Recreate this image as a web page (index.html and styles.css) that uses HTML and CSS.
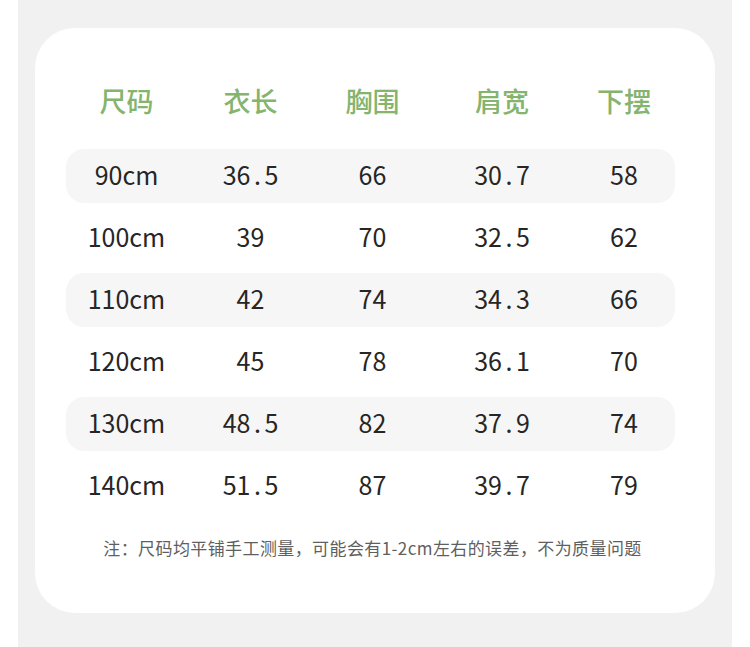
FILE: index.html
```html
<!DOCTYPE html>
<html lang="zh">
<head>
<meta charset="utf-8">
<link rel="stylesheet" href="styles.css">
</head>
<body>
<div class="frame">
  <div class="card">
    <div class="row head">
      <div>尺码</div><div>衣长</div><div>胸围</div><div>肩宽</div><div>下摆</div>
    </div>
    <div class="row shade">
      <div>90cm</div><div>36<span class="dot">.</span>5</div><div>66</div><div>30<span class="dot">.</span>7</div><div>58</div>
    </div>
    <div class="row">
      <div>100cm</div><div>39</div><div>70</div><div>32<span class="dot">.</span>5</div><div>62</div>
    </div>
    <div class="row shade">
      <div>110cm</div><div>42</div><div>74</div><div>34<span class="dot">.</span>3</div><div>66</div>
    </div>
    <div class="row">
      <div>120cm</div><div>45</div><div>78</div><div>36<span class="dot">.</span>1</div><div>70</div>
    </div>
    <div class="row shade">
      <div>130cm</div><div>48<span class="dot">.</span>5</div><div>82</div><div>37<span class="dot">.</span>9</div><div>74</div>
    </div>
    <div class="row">
      <div>140cm</div><div>51<span class="dot">.</span>5</div><div>87</div><div>39<span class="dot">.</span>7</div><div>79</div>
    </div>
    <p class="note">注：尺码均平铺手工测量，可能会有1-2cm左右的误差，不为质量问题</p>
  </div>
</div>
</body>
</html>
```
FILE: styles.css
```css
* { box-sizing: border-box; }
html, body { margin: 0; padding: 0; background: #ffffff; }
body { font-family: "Noto Sans CJK SC", "Noto Sans", sans-serif; }
.frame {
  margin: 0 18px;
  height: 647px;
  background: #f1f1f1;
  padding: 28px 17px 0 17px;
}
.card {
  background: #ffffff;
  border-radius: 40px;
  height: 585px;
  padding: 46px 40px 0 31px;
}
.row {
  display: grid;
  grid-template-columns: 121px 127px 117px 142px 1fr;
  align-items: center;
  height: 54px;
  padding-bottom: 3px;
  margin-bottom: 8px;
  font-size: 25px;
  color: #262626;
  border-radius: 18px;
}
.row > div { text-align: center; line-height: 1; }
.row.head {
  height: 53px;
  padding-bottom: 0;
  margin-bottom: 22px;
  font-size: 27px;
  font-weight: 500;
  color: #84b46e;
}
.row.shade { background: #f6f6f6; }
.dot { margin: 0 3.5px; }
.note {
  margin: 23px 0 0 0;
  height: 24px;
  line-height: 24px;
  text-align: center;
  font-size: 17px;
  letter-spacing: 0.4px;
  color: #5f5f5f;
  padding-left: 4px;
}
```
